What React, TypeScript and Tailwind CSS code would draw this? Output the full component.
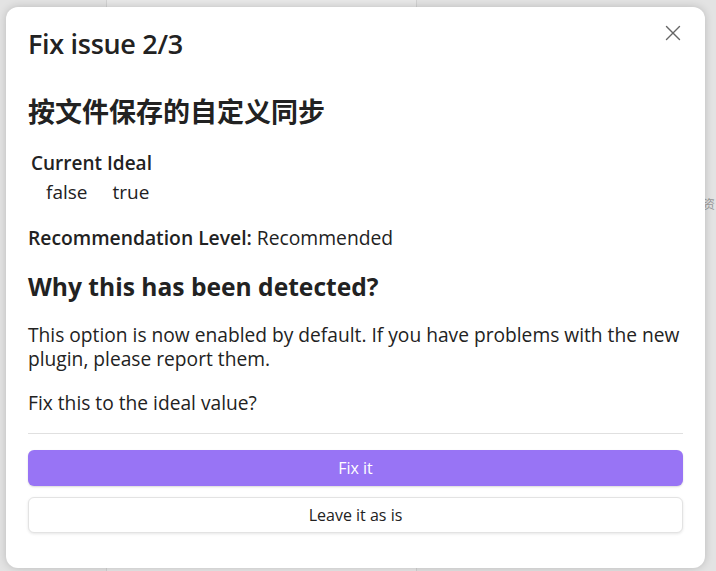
import { X } from "lucide-react";

const App = () => {
  return (
    <div className="relative w-[716px] h-[571px] overflow-hidden bg-[#e3e3e3] font-['Open_Sans','Noto_Sans_CJK_SC',sans-serif] text-[#222]">
      {/* background panes behind the modal */}
      <div className="flex h-full">
        <div className="w-[107px] h-full border-r border-[#d2d2d2]"></div>
        <div className="w-[310px] h-full border-r border-[#d2d2d2] bg-[#e8e8e8]"></div>
        <div className="flex-1 h-full flex items-center justify-end pr-[1px]">
          <span className="text-[12px] text-[#999] mb-[162px]">资</span>
        </div>
      </div>

      <div className="absolute left-[6px] top-[7px] w-[699px] h-[561px] rounded-[12px] bg-white shadow-[0_0_8px_rgba(0,0,0,0.18)] px-[22px] pt-[20px]">
        <button className="absolute right-[19px] top-[13px] text-[#666]">
          <X size={26} strokeWidth={1.3} />
        </button>
        <h1 className="text-[27px] font-semibold leading-[34px] tracking-[-0.3px]">Fix issue 2/3</h1>

        <h2 className="mt-[33px] text-[27px] font-bold leading-[36px]">按文件保存的自定义同步</h2>

        <div className="mt-[19px] pl-[3px]">
          <div className="flex gap-[5px] text-[19px] font-semibold leading-[28px]">
            <span>Current</span>
            <span>Ideal</span>
          </div>
          <div className="mt-[1px] flex gap-[25px] pl-[15px] text-[19px] leading-[28px]">
            <span>false</span>
            <span>true</span>
          </div>
        </div>

        <p className="mt-[18px] text-[19.3px] leading-[28px]">
          <span className="font-semibold">Recommendation Level:</span> Recommended
        </p>

        <h3 className="mt-[18px] text-[24.6px] font-bold leading-[34px]">Why this has been detected?</h3>

        <p className="mt-[19px] -mr-[4px] text-[19.2px] leading-[24px]">
          This option is now enabled by default. If you have problems with the new plugin, please report them.
        </p>
        <p className="mt-[20px] text-[19.2px] leading-[24px]">Fix this to the ideal value?</p>

        <div className="mt-[18px] border-t border-[#e0e0e0]"></div>

        <div className="mt-[16px] flex flex-col gap-[11px]">
          <button className="h-[36px] w-full rounded-[6px] bg-[#9874f5] text-white text-[16px] shadow-[0_1px_2px_rgba(0,0,0,0.15)]">
            Fix it
          </button>
          <button className="h-[36px] w-full rounded-[6px] bg-white border border-[#e3e3e3] text-[#222] text-[16px] shadow-[0_1px_3px_rgba(0,0,0,0.1)]">
            Leave it as is
          </button>
        </div>
      </div>
    </div>
  );
};

export default App;
